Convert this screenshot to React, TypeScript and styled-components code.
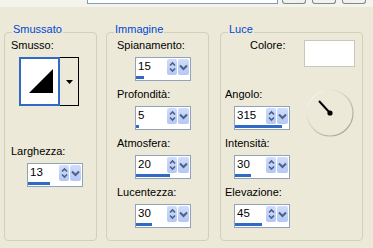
import React from 'react';
import styled, { createGlobalStyle } from 'styled-components';

const GlobalStyle = createGlobalStyle`
  html, body {
    margin: 0;
    padding: 0;
    background: #ECE9D8;
  }
  body {
    font-family: "Liberation Sans", Arial, sans-serif;
    font-size: 11px;
    color: #000;
  }
`;

const Page = styled.div`
  width: 373px;
  height: 248px;
  overflow: hidden;
  background: #ECE9D8;
  display: flex;
  flex-direction: column;
`;

const TopStrip = styled.div`
  height: 7px;
  flex-shrink: 0;
  background: #F4F3EC;
  display: flex;
  align-items: flex-start;
  padding-left: 87px;
`;

const PathInput = styled.div`
  width: 191px;
  height: 4px;
  box-sizing: border-box;
  background: #fff;
  border: 1px solid #7F9DB9;
  border-top: none;
`;

const StripButtons = styled.div`
  display: flex;
  gap: 6px;
  margin-left: 4px;
`;

const StripButton = styled.div`
  width: 24px;
  height: 4px;
  box-sizing: border-box;
  border: 1px solid #7A8A99;
  border-top: none;
  border-radius: 0 0 3px 3px;
  background: #F2F1EA;
`;

const Groups = styled.div`
  display: flex;
  margin-top: 25px;
  padding-left: 4px;
`;

const GroupBox = styled.div<{ $w: number; $gap: number; $pl: number }>`
  position: relative;
  width: ${p => p.$w}px;
  height: 209px;
  margin-left: ${p => p.$gap}px;
  box-sizing: border-box;
  border: 1px solid #D0D0BF;
  border-radius: 4px;
  padding: 6px 0 0 ${p => p.$pl}px;
  display: flex;
  flex-direction: column;
`;

const Legend = styled.div`
  position: absolute;
  top: -10px;
  left: 7px;
  padding: 0 1px;
  line-height: 13px;
  background: #ECE9D8;
  color: #0046D5;
`;

const Label = styled.div`
  line-height: 13px;
  white-space: nowrap;
`;

const Field = styled.div<{ $indent: number }>`
  display: flex;
  flex-direction: column;
  align-items: flex-start;
  margin-bottom: 7px;
  & > :last-child {
    margin-top: 5px;
    margin-left: ${p => p.$indent}px;
  }
`;

/* bevel picker */
const Picker = styled.div`
  display: flex;
  margin: 5px 0 0 8px;
  height: 49px;
`;

const Preview = styled.div`
  width: 41px;
  height: 49px;
  box-sizing: border-box;
  border: 2px solid #316AC5;
  background: #fff;
`;

const PickerDrop = styled.div`
  width: 19px;
  height: 49px;
  box-sizing: border-box;
  border: 1px solid #000;
  border-left: none;
  background: #ECE9D8;
  display: flex;
  align-items: center;
  justify-content: center;
`;

const Spacer = styled.div<{ $h: number }>`
  height: ${p => p.$h}px;
  flex-shrink: 0;
`;

/* spin control */
const SpinBox = styled.div`
  width: 56px;
  height: 24px;
  box-sizing: border-box;
  border: 1px solid #8FA3BA;
  background: #fff;
  display: flex;
  flex-direction: column;
`;

const SpinTop = styled.div`
  display: flex;
  height: 17px;
`;

const SpinValue = styled.div`
  flex: 1;
  padding-left: 2px;
  line-height: 17px;
  font-size: 11.5px;
`;

const SpinButton = styled.div<{ $w: number }>`
  width: ${p => p.$w}px;
  margin: 1px 1px 0 0;
  border-radius: 2px;
  background: linear-gradient(#D0DDFB, #B4C8F5);
  display: flex;
  align-items: center;
  justify-content: center;
`;

const Track = styled.div`
  height: 3px;
  margin: 1px 0 0 0;
`;

const Fill = styled.div`
  height: 3px;
  background: #316AC5;
`;

/* luce */
const ColorRow = styled.div`
  display: flex;
  align-items: flex-start;
  height: 42px;
  margin-bottom: 7px;
`;

const ColorLabel = styled(Label)`
  margin-left: 25px;
`;

const Swatch = styled.div`
  width: 51px;
  height: 27px;
  margin: 1px 7px 0 auto;
  box-sizing: border-box;
  border: 1px solid #C9C7BA;
  background: #fff;
`;

const DialRow = styled.div`
  display: flex;
  align-items: flex-start;
`;

const DialWrap = styled.div`
  margin: 1px 8px 0 auto;
  width: 48px;
  height: 48px;
`;

const Spin = ({ value, max }: { value: number; max: number }) => (
  <SpinBox>
    <SpinTop>
      <SpinValue>{value}</SpinValue>
      <SpinButton $w={10}>
        <svg width="7" height="12" viewBox="0 0 7 12">
          <path d="M1 4.5 L3.5 2 L6 4.5 M1 7.5 L3.5 10 L6 7.5" fill="none" stroke="#4D6185" strokeWidth="1.6" />
        </svg>
      </SpinButton>
      <SpinButton $w={11}>
        <svg width="9" height="7" viewBox="0 0 9 7">
          <path d="M1 1.5 L4.5 5 L8 1.5" fill="none" stroke="#4D6185" strokeWidth="2" />
        </svg>
      </SpinButton>
    </SpinTop>
    <Track>
      <Fill style={{ width: Math.round((value / max) * 54) }} />
    </Track>
  </SpinBox>
);

const Dial = () => (
  <DialWrap>
    <svg width="48" height="48" viewBox="0 0 48 48">
      <defs>
        <linearGradient id="ring" x1="0" y1="0" x2="1" y2="1">
          <stop offset="0" stopColor="#FFFFFF" />
          <stop offset="1" stopColor="#9C998A" />
        </linearGradient>
      </defs>
      <circle cx="24" cy="24" r="23" fill="none" stroke="url(#ring)" strokeWidth="1.2" />
      <line x1="13" y1="12" x2="24" y2="24" stroke="#000" strokeWidth="2" />
      <circle cx="24" cy="24" r="2.6" fill="#000" />
    </svg>
  </DialWrap>
);

export default function App() {
  return (
    <Page>
      <GlobalStyle />
      <TopStrip>
        <PathInput />
        <StripButtons>
          <StripButton />
          <StripButton />
          <StripButton />
        </StripButtons>
      </TopStrip>
      <Groups>
        <GroupBox $w={93} $gap={0} $pl={6}>
          <Legend>Smussato</Legend>
          <Label>Smusso:</Label>
          <Picker>
            <Preview>
              <svg width="37" height="45" viewBox="0 0 37 45">
                <polygon points="8,34 32,34 32,10" fill="#000" />
              </svg>
            </Preview>
            <PickerDrop>
              <svg width="7" height="4" viewBox="0 0 7 4">
                <polygon points="0,0 7,0 3.5,4" fill="#000" />
              </svg>
            </PickerDrop>
          </Picker>
          <Spacer $h={39} />
          <Field $indent={16}>
            <Label>Larghezza:</Label>
            <Spin value={13} max={32} />
          </Field>
        </GroupBox>

        <GroupBox $w={103} $gap={9} $pl={10}>
          <Legend>Immagine</Legend>
          <Field $indent={18}>
            <Label>Spianamento:</Label>
            <Spin value={15} max={100} />
          </Field>
          <Field $indent={18}>
            <Label>Profondità:</Label>
            <Spin value={5} max={100} />
          </Field>
          <Field $indent={18}>
            <Label>Atmosfera:</Label>
            <Spin value={20} max={32} />
          </Field>
          <Field $indent={18}>
            <Label>Lucentezza:</Label>
            <Spin value={30} max={100} />
          </Field>
        </GroupBox>

        <GroupBox $w={143} $gap={11} $pl={4}>
          <Legend>Luce</Legend>
          <ColorRow>
            <ColorLabel>Colore:</ColorLabel>
            <Swatch />
          </ColorRow>
          <DialRow>
            <Field $indent={9}>
              <Label>Angolo:</Label>
              <Spin value={315} max={359} />
            </Field>
            <Dial />
          </DialRow>
          <Field $indent={9}>
            <Label>Intensità:</Label>
            <Spin value={30} max={100} />
          </Field>
          <Field $indent={9}>
            <Label>Elevazione:</Label>
            <Spin value={45} max={90} />
          </Field>
        </GroupBox>
      </Groups>
    </Page>
  );
}
